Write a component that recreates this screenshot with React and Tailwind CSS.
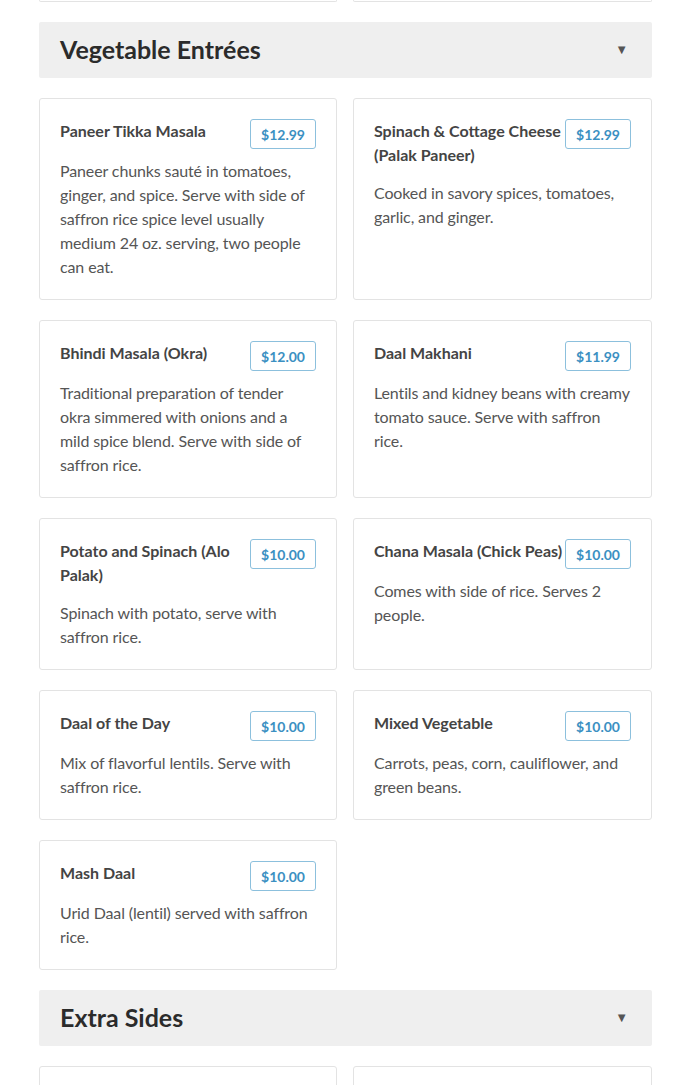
import React from "react";

const vegetables = [
    { name: "Paneer Tikka Masala", price: "$12.99", desc: "Paneer chunks sauté in tomatoes, ginger, and spice. Serve with side of saffron rice spice level usually medium 24 oz. serving, two people can eat." },
    { name: "Spinach & Cottage Cheese (Palak Paneer)", price: "$12.99", desc: "Cooked in savory spices, tomatoes, garlic, and ginger." },
    { name: "Bhindi Masala (Okra)", price: "$12.00", desc: "Traditional preparation of tender okra simmered with onions and a mild spice blend. Serve with side of saffron rice." },
    { name: "Daal Makhani", price: "$11.99", desc: "Lentils and kidney beans with creamy tomato sauce. Serve with saffron rice." },
    { name: "Potato and Spinach (Alo Palak)", price: "$10.00", desc: "Spinach with potato, serve with saffron rice." },
    { name: "Chana Masala (Chick Peas)", price: "$10.00", desc: "Comes with side of rice. Serves 2 people." },
    { name: "Daal of the Day", price: "$10.00", desc: "Mix of flavorful lentils. Serve with saffron rice." },
    { name: "Mixed Vegetable", price: "$10.00", desc: "Carrots, peas, corn, cauliflower, and green beans." },
    { name: "Mash Daal", price: "$10.00", desc: "Urid Daal (lentil) served with saffron rice." },
];

function MenuCard({ item }) {
    return (
        <div className="border border-[#e3e3e3] rounded-[3px] bg-white p-5">
            <div className="flex items-start justify-between">
                <h3 className="text-[16px] leading-6 font-bold text-[#444] pb-[14px] pr-[2px]">{item.name}</h3>
                <span className="shrink-0 mb-[10px] border border-[#8cc0dd] rounded-[3px] h-[30px] px-[10px] flex items-center text-[14px] font-bold text-[#3b90c2]">
                    {item.price}
                </span>
            </div>
            <p className="text-[16px] leading-6 text-[#555] tracking-[-0.12px]">{item.desc}</p>
        </div>
    );
}

function SectionHeader({ title }) {
    return (
        <div className="bg-[#efefef] h-14 rounded-[2px] flex items-center justify-between pl-[21px] pr-[24px]">
            <h2 className="text-[25px] font-bold text-[#2b2b2b]">{title}</h2>
            <span className="text-[13px] text-[#555]">▼</span>
        </div>
    );
}

export default function App() {
    return (
        <div className="min-h-screen bg-white overflow-hidden" style={{ fontFamily: "Lato, 'Open Sans', sans-serif" }}>
            <div className="ml-[39px] w-[613px]">
                {/* tail of previous section */}
                <div className="grid grid-cols-[298px_299px] gap-4">
                    <div className="h-[2px] border-x border-b border-[#e3e3e3] rounded-b-[3px]" />
                    <div className="h-[2px] border-x border-b border-[#e3e3e3] rounded-b-[3px]" />
                </div>

                <div className="mt-5">
                    <SectionHeader title="Vegetable Entrées" />
                </div>

                <div className="grid grid-cols-[298px_299px] gap-x-4 gap-y-5 mt-5">
                    {vegetables.map((item) => (
                        <MenuCard key={item.name} item={item} />
                    ))}
                </div>

                <div className="mt-5">
                    <SectionHeader title="Extra Sides" />
                </div>

                <div className="grid grid-cols-[298px_299px] gap-4 mt-5">
                    <div className="h-10 border border-[#e3e3e3] rounded-[3px]" />
                    <div className="h-10 border border-[#e3e3e3] rounded-[3px]" />
                </div>
            </div>
        </div>
    );
}
